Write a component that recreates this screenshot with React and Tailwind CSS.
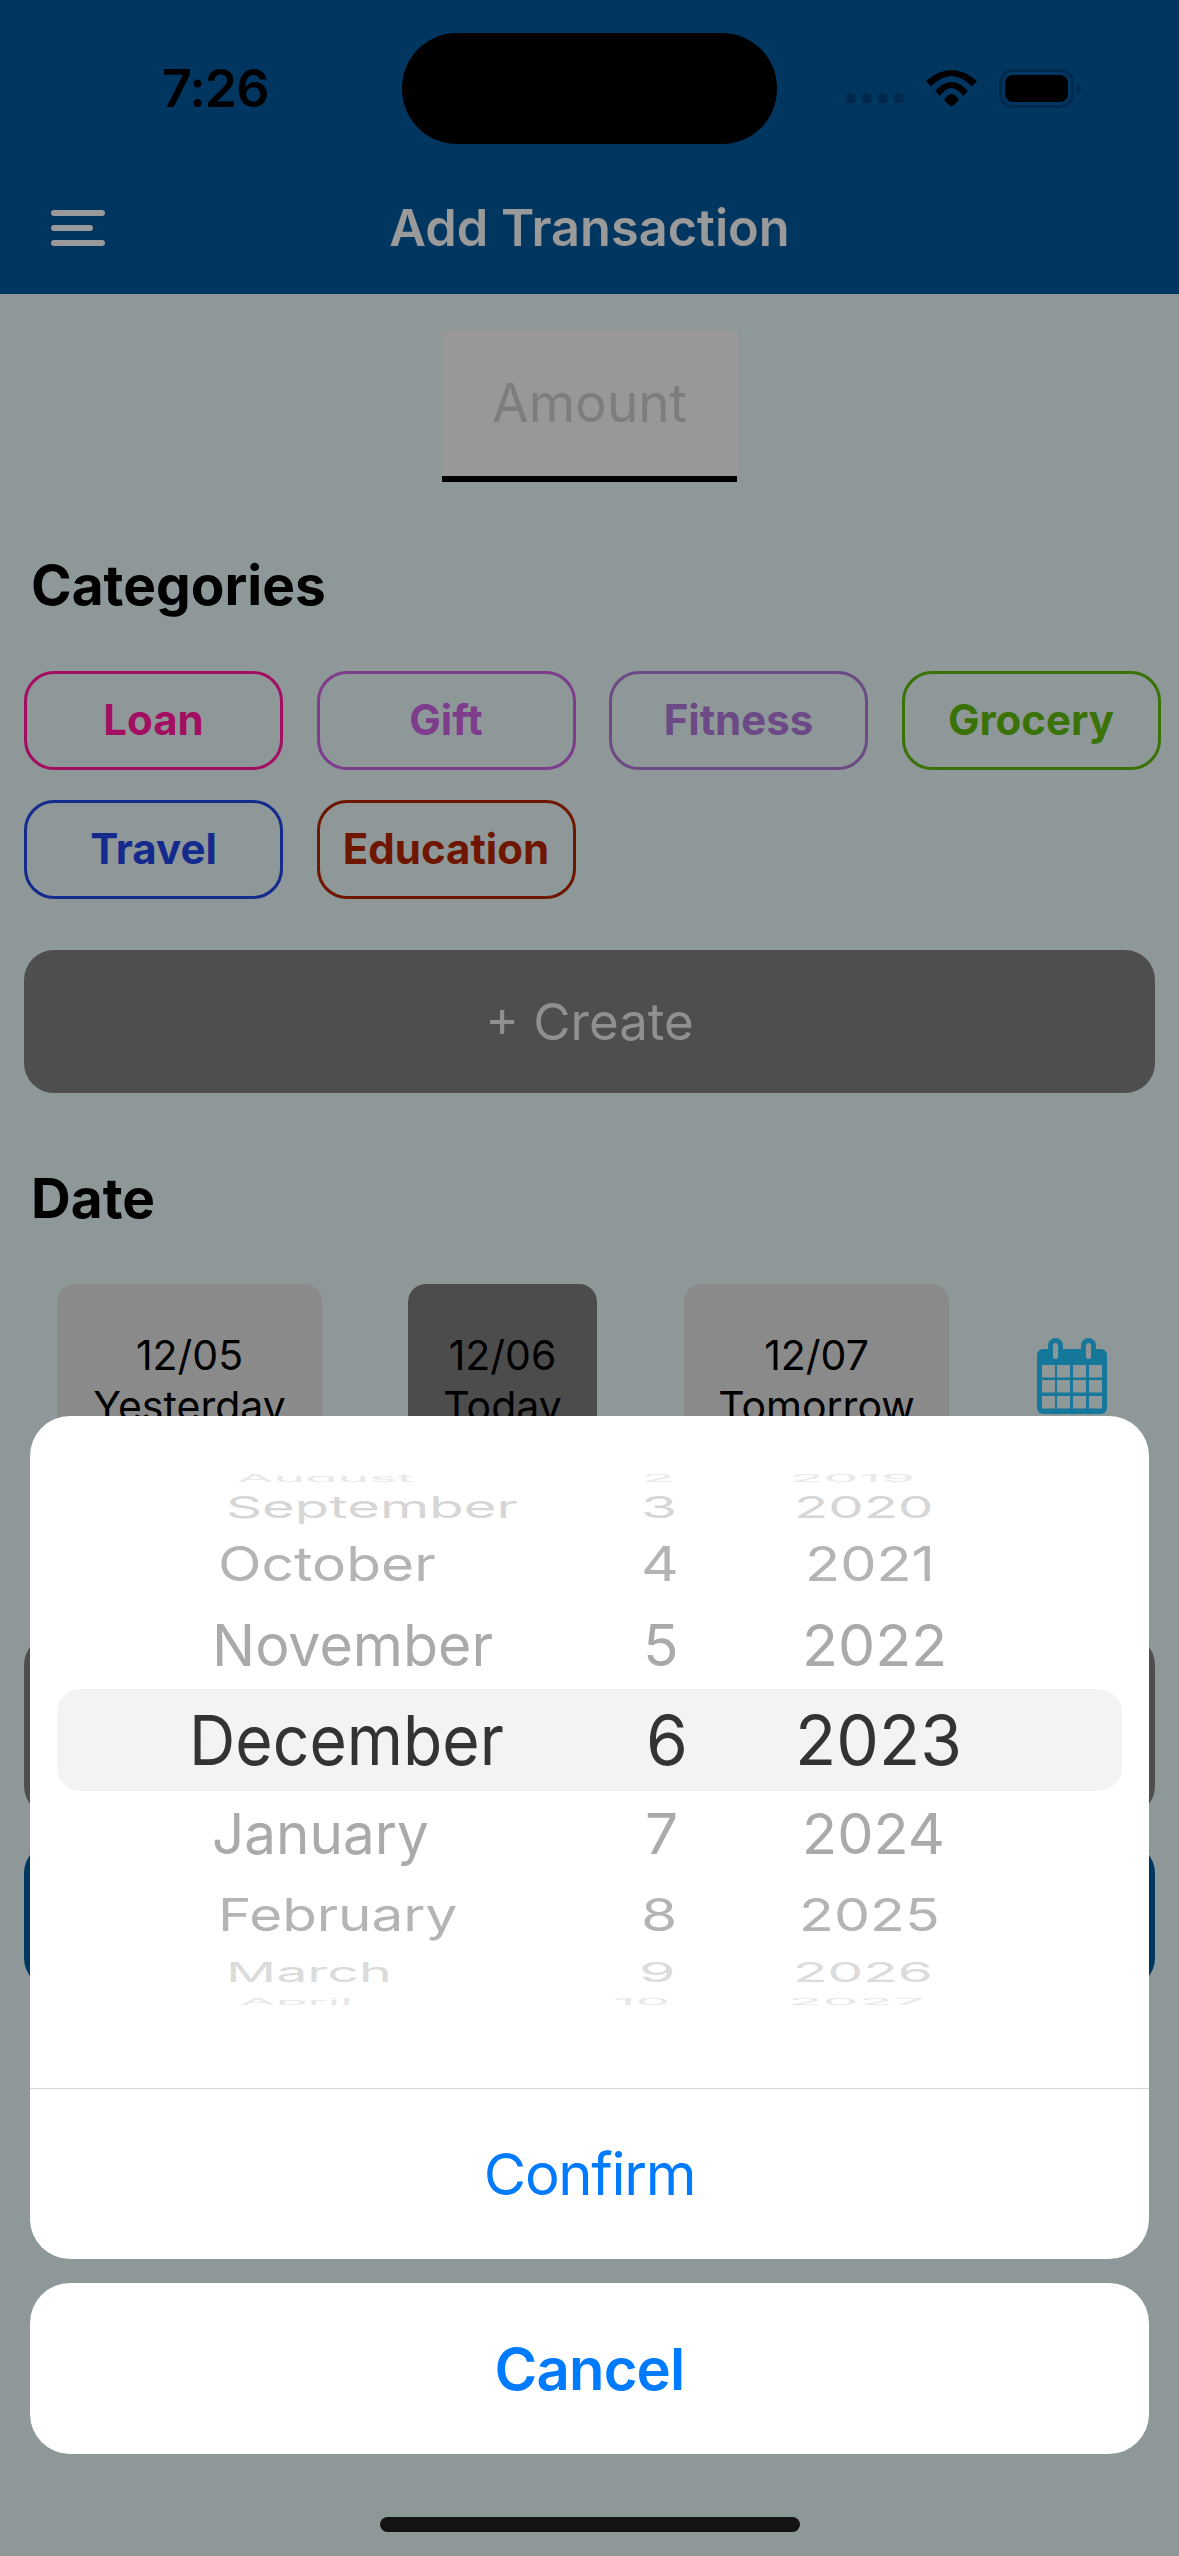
const chips = [
  { label: 'Loan', className: 'border-[#a30e62] text-[#a30e62]' },
  { label: 'Gift', className: 'border-[#7e3c8c] text-[#7e3c8c]' },
  { label: 'Fitness', className: 'border-[#6b4a85] text-[#6b4a85]' },
  { label: 'Grocery', className: 'border-[#3a7208] text-[#3a7208]' },
  { label: 'Travel', className: 'border-[#142a8c] text-[#142a8c]' },
  { label: 'Education', className: 'border-[#6e1600] text-[#6e1600]' },
];

const days = [
  { date: '12/05', label: 'Yesterday', className: 'w-[265px] bg-[#8a8a8a]' },
  { date: '12/06', label: 'Today', className: 'ml-[86px] w-[189px] bg-[#4c4c4c]' },
  { date: '12/07', label: 'Tomorrow', className: 'ml-[87px] w-[265px] bg-[#8a8a8a]' },
];

// each wheel row: height, vertical squash, colour, then [text, left pad, horizontal scale] per column
const wheel = [
  { h: 'h-[8px] overflow-hidden', sy: 'scale-y-[0.14]', color: 'text-[#e8e8e8]', month: ['August', 'pl-[180px]', 'scale-x-[0.77]'], day: ['2', 'pl-[41px]', 'scale-x-[0.8]'], year: ['2019', 'pl-[10px]', 'scale-x-[0.8]'] },
  { h: 'h-[50px]', sy: 'scale-y-[0.44]', color: 'text-[#d6d6d6]', month: ['September', 'pl-[169px]', 'scale-x-[0.815]'], day: ['3', 'pl-[41px]', 'scale-x-[0.85]'], year: ['2020', 'pl-[14px]', 'scale-x-[0.815]'] },
  { h: 'h-[64px]', sy: 'scale-y-[0.69]', color: 'text-[#b4b4b4]', month: ['October', 'pl-[161px]', 'scale-x-[0.825]'], day: ['4', 'pl-[41px]', 'scale-x-[0.85]'], year: ['2021', 'pl-[25px]', 'scale-x-[0.835]'] },
  { h: 'h-[93px] pt-[6px]', sy: 'scale-y-[0.84]', color: 'text-[#aaaaaa]', month: ['November', 'pl-[155px]', 'scale-x-[0.83]'], day: ['5', 'pl-[43px]', 'scale-x-[0.85]'], year: ['2022', 'pl-[22px]', 'scale-x-[0.855]'] },
  { h: 'h-[102px] rounded-[24px] bg-[#f3f3f3]', sy: 'scale-y-[1]', color: 'text-[#333333]', month: ['December', 'pl-[132px]', 'scale-x-[0.93]'], day: ['6', 'pl-[46px]', 'scale-x-[0.98]'], year: ['2023', 'pl-[15px]', 'scale-x-[0.98]'] },
  { h: 'h-[85px]', sy: 'scale-y-[0.82]', color: 'text-[#aaaaaa]', month: ['January', 'pl-[155px]', 'scale-x-[0.82]'], day: ['7', 'pl-[45px]', 'scale-x-[0.85]'], year: ['2024', 'pl-[22px]', 'scale-x-[0.835]'] },
  { h: 'h-[78px]', sy: 'scale-y-[0.65]', color: 'text-[#b4b4b4]', month: ['February', 'pl-[161px]', 'scale-x-[0.82]'], day: ['8', 'pl-[41px]', 'scale-x-[0.85]'], year: ['2025', 'pl-[19px]', 'scale-x-[0.83]'] },
  { h: 'h-[36px]', sy: 'scale-y-[0.4]', color: 'text-[#dbdbdb]', month: ['March', 'pl-[169px]', 'scale-x-[0.805]'], day: ['9', 'pl-[39px]', 'scale-x-[0.85]'], year: ['2026', 'pl-[13px]', 'scale-x-[0.82]'] },
  { h: 'mt-[7px] h-[8px] overflow-hidden', sy: 'scale-y-[0.13]', color: 'text-[#e8e8e8]', month: ['April', 'pl-[183px]', 'scale-x-[0.75]'], day: ['10', 'pl-[13px]', 'scale-x-[0.8]'], year: ['2027', 'pl-[8px]', 'scale-x-[0.82]'] },
];

function WheelCell({ cell, width, row }) {
  const [text, pad, sx] = cell;
  return (
    <div className={`flex items-center ${width} ${pad}`}>
      <span className={`inline-block origin-left whitespace-nowrap text-[69px] leading-none ${sx} ${row.sy}`}>{text}</span>
    </div>
  );
}

function Wifi() {
  return (
    <svg width="51" height="37" viewBox="0 0 51 37" fill="#000000">
      <path d="M0 11Q25.5 -11 51 11L46 16.5Q25.5 -4.5 5 16.5Z" />
      <path d="M9 21Q25.5 3 42 21L37 26Q25.5 10 14 26Z" />
      <path d="M18 30Q25.5 18 33 30L25.5 37Z" />
    </svg>
  );
}

function Battery() {
  return (
    <svg width="82" height="39" viewBox="0 0 82 39">
      <rect x="1.5" y="1.5" width="72" height="36" rx="12" fill="none" stroke="#002a4d" strokeWidth="3" />
      <rect x="6" y="6" width="63" height="27" rx="8" fill="#000000" />
      <path d="M78 14C81 15 82 17 82 19.5C82 22 81 24 78 25Z" fill="#002a4d" />
    </svg>
  );
}

function CalendarIcon() {
  return (
    <svg width="70" height="76" viewBox="0 0 70 76" className="ml-[88px] mt-[54px]">
      <rect x="0" y="11" width="70" height="65" rx="6" fill="#157799" />
      <rect x="11" y="0" width="15" height="24" rx="7.5" fill="#157799" />
      <rect x="44" y="0" width="15" height="24" rx="7.5" fill="#157799" />
      <rect x="16" y="5" width="5" height="16" rx="2.5" fill="#8f9898" />
      <rect x="49" y="5" width="5" height="16" rx="2.5" fill="#8f9898" />
      {[27, 42, 58].map((y) =>
        [5, 20, 36, 52].map((x) => <rect key={`${x}-${y}`} x={x} y={y} width="13" height="12.5" fill="#8f9898" />)
      )}
    </svg>
  );
}

export default function App() {
  return (
    <div className="relative h-[2556px] w-[1179px] overflow-hidden bg-[#8f9898] font-['Inter',sans-serif]">
      <header className="h-[294px] bg-[#003660]">
        <div className="flex items-center pt-[33px]">
          <div className="w-[402px] pl-[162px] text-[52px] font-semibold leading-none tracking-[-1px] text-black">7:26</div>
          <div className="h-[111px] w-[375px] rounded-[55px] bg-black" />
          <div className="ml-[69px] mt-[18px] flex gap-[6px]">
            <span className="h-[10px] w-[10px] rounded-[3px] bg-[#002a4d]" />
            <span className="h-[10px] w-[10px] rounded-[3px] bg-[#002a4d]" />
            <span className="h-[10px] w-[10px] rounded-[3px] bg-[#002a4d]" />
            <span className="h-[10px] w-[10px] rounded-[3px] bg-[#002a4d]" />
          </div>
          <div className="ml-[22px] flex"><Wifi /></div>
          <div className="ml-[22px] flex"><Battery /></div>
        </div>
        <div className="mt-[44px] grid h-[80px] grid-cols-[1fr_auto_1fr] items-center">
          <div className="flex flex-col gap-[9px] pl-[51px]">
            <span className="h-[6px] w-[54px] rounded-full bg-[#9a9a9a]" />
            <span className="h-[6px] w-[42px] rounded-full bg-[#9a9a9a]" />
            <span className="h-[6px] w-[54px] rounded-full bg-[#9a9a9a]" />
          </div>
          <h1 className="text-[50.5px] font-semibold leading-none text-[#9a9a9a]">Add Transaction</h1>
        </div>
      </header>

      <main>
        <div className="flex justify-center pt-[36px]">
          <div className="flex h-[152px] w-[295px] items-center justify-center border-b-[6px] border-black bg-[#989898] text-[53px] leading-none text-[#7d7d7d]">
            Amount
          </div>
        </div>

        <h2 className="mt-[77px] pl-[31px] text-[55px] font-bold leading-[52px] text-black">Categories</h2>
        <div className="mt-[60px] flex flex-wrap gap-x-[33.5px] gap-y-[30px] pl-[24px]">
          {chips.map((chip) => (
            <div
              key={chip.label}
              className={`flex h-[99px] w-[259px] items-center justify-center rounded-[30px] border-[3px] pb-[2px] text-[42px] font-bold leading-none ${chip.className}`}
            >
              {chip.label}
            </div>
          ))}
        </div>

        <div className="mx-[24px] mt-[51px] flex h-[143px] items-center justify-center rounded-[30px] bg-[#4e4e4e] text-[51px] leading-none text-[#8f9090]">
          + Create
        </div>

        <h2 className="mt-[79px] pl-[31px] text-[55px] font-bold leading-[52px] text-black">Date</h2>
        <div className="mt-[60px] flex pl-[57px]">
          {days.map((day) => (
            <div
              key={day.date}
              className={`flex h-[180px] flex-col items-center rounded-[18px] pt-[46px] text-[41px] leading-[51px] text-black ${day.className}`}
            >
              <span>{day.date}</span>
              <span>{day.label}</span>
            </div>
          ))}
          <CalendarIcon />
        </div>

        <div className="mx-[24px] mt-[171px] h-[181px] rounded-[30px] bg-[#4e4e4e]" />
        <div className="mx-[24px] mt-[27px] h-[145px] rounded-[30px] bg-[#003660]" />
      </main>

      <div className="absolute bottom-[102px] left-[30px] right-[30px] flex flex-col gap-[24px]">
        <div className="rounded-[40px] bg-white">
          <div className="h-[672px] px-[27px] pt-[58px]">
            {wheel.map((row) => (
              <div key={row.month[0]} className={`flex ${row.h} ${row.color}`}>
                <WheelCell cell={row.month} row={row} width="w-[543px]" />
                <WheelCell cell={row.day} row={row} width="w-[180px]" />
                <WheelCell cell={row.year} row={row} width="w-[300px]" />
              </div>
            ))}
          </div>
          <div className="flex h-[171px] items-center justify-center border-t border-[#d5d5d5] text-[58px] leading-none tracking-[-1.3px] text-[#007aff]">
            Confirm
          </div>
        </div>
        <div className="flex h-[171px] items-center justify-center rounded-[40px] bg-white text-[58px] font-semibold leading-none tracking-[-0.8px] text-[#007aff]">
          Cancel
        </div>
      </div>

      <div className="absolute bottom-[24px] left-[380px] h-[15px] w-[420px] rounded-full bg-[#141414]" />
    </div>
  );
}
